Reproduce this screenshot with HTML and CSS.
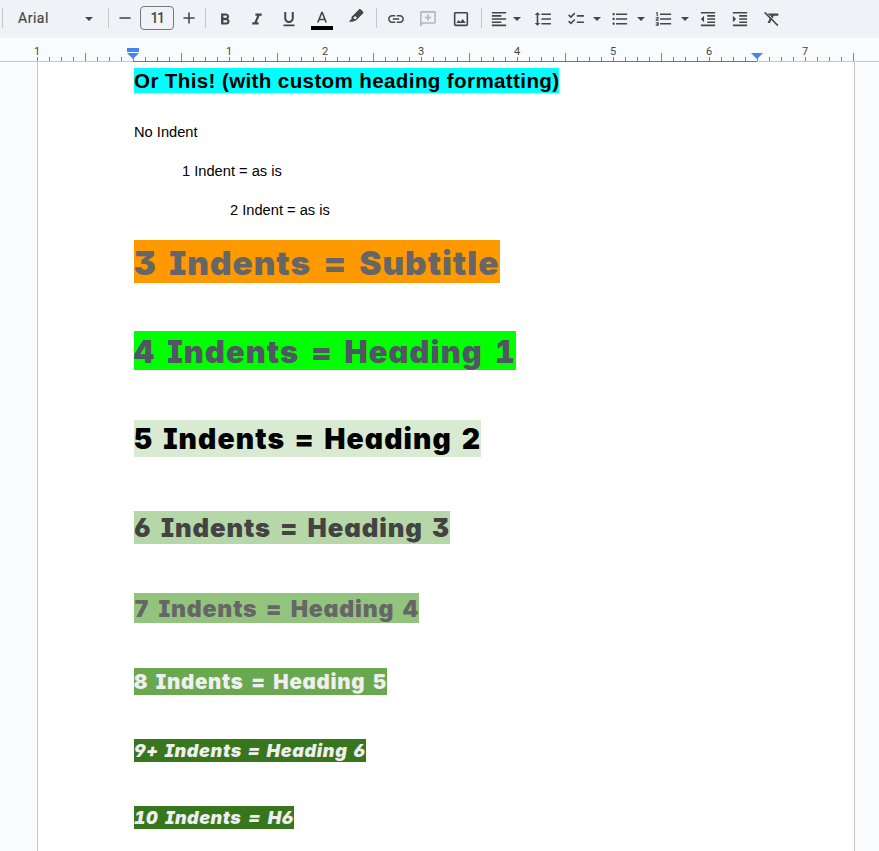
FILE: index.html
```
<!DOCTYPE html>
<html lang="en">
<head>
<meta charset="utf-8">
<title>Document</title>
<link rel="stylesheet" href="styles.css">
</head>
<body>
<div class="toolbar">
  <i class="sep first"></i>
  <span class="font-name">Arial</span><span class="caret font-caret"></span>
  <i class="sep s1"></i>
  <span class="cell minus"><svg viewBox="0 0 24 24"><path d="M5 11h14v2H5z"/></svg></span>
  <span class="size">11</span>
  <span class="cell plus"><svg viewBox="0 0 24 24"><path d="M19 13h-6v6h-2v-6H5v-2h6V5h2v6h6v2z"/></svg></span>
  <i class="sep s2"></i>
  <span class="cell"><svg viewBox="0 0 24 24"><path d="M15.6 11.8c1-.7 1.6-1.8 1.6-2.8 0-2.3-1.8-4-4-4H7v14h7c2.1 0 3.7-1.7 3.7-3.8 0-1.500-.86-2.800-2.100-3.400zM10 7.500h3c.83 0 1.500.67 1.500 1.500s-.67 1.500-1.500 1.500h-3v-3zm3.500 9H10v-3h3.500c.83 0 1.500.67 1.500 1.500s-.67 1.500-1.500 1.500z"/></svg></span>
  <span class="cell"><svg viewBox="0 0 24 24"><path d="M10 5v3h2.200l-3.400 8H6v3h8v-3h-2.200l3.400-8H18V5z"/></svg></span>
  <span class="cell"><svg viewBox="0 0 24 24"><path d="M12 17c3.300 0 6-2.700 6-6V3h-2.500v8c0 1.900-1.600 3.500-3.500 3.500S8.500 12.900 8.500 11V3H6v8c0 3.300 2.700 6 6 6zm-7 2v2h14v-2H5z"/></svg></span>
  <span class="cell wide color"><svg viewBox="0 0 24 24"><path d="M11 3 5.500 17h2.250l1.120-3h6.250l1.120 3h2.250L13 3h-2zm-1.380 9L12 5.700 14.380 12H9.620z"/></svg><b></b></span>
  <span class="cell wide marker"><svg viewBox="0 0 24 24"><path fill-rule="evenodd" d="M15.500 2.700 6.800 11.400c-.7.7-.8 1.700-.2 2.400L3 18h5.300l1.400-1.400c.8.500 1.700.4 2.300-.2l8.800-8.700c.8-.8.800-1.900 0-2.700l-2.400-2.300c-.8-.8-2.100-.8-2.900-.4zM11 10.600l2.200 2.200-2.400 2.300-2.200-2.200z"/></svg></span>
  <i class="sep s3"></i>
  <span class="cell"><svg viewBox="0 0 24 24"><path d="M3.900 12c0-1.710 1.390-3.100 3.100-3.100h4V7H7c-2.760 0-5 2.240-5 5s2.240 5 5 5h4v-1.900H7c-1.710 0-3.100-1.390-3.100-3.100zM8 13h8v-2H8v2zm9-6h-4v1.900h4c1.710 0 3.100 1.390 3.100 3.100s-1.390 3.100-3.100 3.100h-4V17h4c2.760 0 5-2.240 5-5s-2.240-5-5-5z"/></svg></span>
  <span class="cell faded"><svg viewBox="0 0 24 24"><path d="M20 2H4c-1.100 0-2 .9-2 2v18l4-4h14c1.100 0 2-.9 2-2V4c0-1.100-.9-2-2-2zm0 14H5.200L4 17.200V4h16v12zM11 14h2v-3h3V9h-3V6h-2v3H8v2h3z"/></svg></span>
  <span class="cell image"><svg viewBox="0 0 24 24"><path d="M19 5v14H5V5h14m0-2H5c-1.100 0-2 .9-2 2v14c0 1.100.9 2 2 2h14c1.100 0 2-.9 2-2V5c0-1.100-.9-2-2-2zm-4.860 8.860-3 3.870L9 13.140 6 17h12l-3.860-5.140z"/></svg></span>
  <i class="sep s4"></i>
  <span class="cell narrow align"><svg viewBox="0 0 24 24"><path d="M15 15H3v2h12v-2zm0-8H3v2h12V7zM3 13h18v-2H3v2zm0 8h18v-2H3v2zM3 3v2h18V3H3z"/></svg></span><span class="caret c0"></span>
  <span class="cell spacing"><svg viewBox="0 0 24 24"><path d="M6 7h2.500L5 3.500 1.500 7H4v10H1.500L5 20.500 8.500 17H6V7zm4-2v2h12V5H10zm0 14h12v-2H10v2zm0-6h12v-2H10v2z"/></svg></span>
  <span class="cell narrow check"><svg viewBox="0 0 24 24"><path d="M22 7h-9v2h9V7zm0 8h-9v2h9v-2zM5.540 11 2 7.460l1.410-1.410 2.120 2.120 4.240-4.240 1.410 1.410L5.540 11zm0 8L2 15.460l1.410-1.410 2.120 2.120 4.240-4.240 1.410 1.410L5.540 19z"/></svg></span><span class="caret"></span>
  <span class="cell narrow list"><svg viewBox="0 0 24 24"><path d="M4 10.500c-.83 0-1.500.67-1.500 1.500s.67 1.500 1.500 1.500 1.500-.67 1.500-1.500-.67-1.500-1.500-1.500zm0-6c-.83 0-1.500.67-1.500 1.500S3.170 7.500 4 7.500 5.500 6.830 5.500 6 4.830 4.500 4 4.500zm0 12c-.83 0-1.500.68-1.500 1.500s.68 1.500 1.500 1.500 1.500-.68 1.500-1.500-.67-1.500-1.500-1.500zM7 19h14v-2H7v2zm0-6h14v-2H7v2zm0-8v2h14V5H7z"/></svg></span><span class="caret"></span>
  <span class="cell narrow list"><svg viewBox="0 0 24 24"><path d="M1.500 17h2.500v.5H2.500v1H4v.5H1.500v1.500h4V16h-4v1zm1.200-8.500h1.500V3.500H1.800v1.200h.9v3.800zm-1.200 2.500h2.200L1.500 13v1.200h4V13H3.600l1.900-2.100V9.800h-4v1.200zM7 5v2h14V5H7zm0 14h14v-2H7v2zm0-6h14v-2H7v2z"/></svg></span><span class="caret"></span>
  <span class="cell narrow list"><svg viewBox="0 0 24 24"><path d="M11 17h10v-2H11v2zm-8-5 4 4V8l-4 4zm0 9h18v-2H3v2zM3 3v2h18V3H3zm8 6h10V7H11v2zm0 4h10v-2H11v2z"/></svg></span>
  <span class="cell narrow tail"><svg viewBox="0 0 24 24"><path d="M3 21h18v-2H3v2zM3 8v8l4-4-4-4zm8 9h10v-2H11v2zM3 3v2h18V3H3zm8 6h10V7H11v2zm0 4h10v-2H11v2z"/></svg></span>
  <span class="cell narrow tail clear"><svg viewBox="0 0 24 24"><path d="M20 8V5H6.390l3 3h1.830l-.55 1.280 2.090 2.100L14.210 8zM3.410 2.860 2 4.270l6.970 6.970L6.500 17h3l1.570-3.660L18.730 21l1.410-1.410z"/></svg></span>
</div>
<svg class="ruler" width="879" height="24" viewBox="0 0 879 24">
  <defs>
    <pattern id="ticks" x="37" y="0" width="96" height="24" patternUnits="userSpaceOnUse">
      <path d="M0 19h1v4H0zM12 19h1v4h-1zM24 19h1v4h-1zM36 19h1v4h-1zM48 15h1v8h-1zM60 19h1v4h-1zM72 19h1v4h-1zM84 19h1v4h-1z" fill="#808386"/>
    </pattern>
  </defs>
  <rect x="37" y="0" width="817" height="24" fill="url(#ticks)"/>
  <path d="M0 23h879v1H0z" fill="#c7c7c7"/>
  <path d="M133 23h624v1H133z" fill="#757575"/>
  <g class="numbers"><text x="37" y="17">1</text><text x="229" y="17">1</text><text x="325" y="17">2</text><text x="421" y="17">3</text><text x="517" y="17">4</text><text x="613" y="17">5</text><text x="709" y="17">6</text><text x="805" y="17">7</text></g>
  <path d="M127 10h12v4h-12zM127 15h12l-6 6zM751 15h12l-6 6z" fill="#4285f4"/>
</svg>
<main class="page">
  <h1 class="title"><span>Or This! (with custom heading formatting)</span></h1>
  <p>No Indent</p>
  <p class="in1">1 Indent = as is</p>
  <p class="in2">2 Indent = as is</p>
  <h2 class="lex sub"><span>3 Indents = Subtitle</span></h2>
  <h2 class="lex h1"><span>4 Indents = Heading 1</span></h2>
  <h2 class="lex h2"><span>5 Indents = Heading 2</span></h2>
  <h3 class="lex h3"><span>6 Indents = Heading 3</span></h3>
  <h4 class="lex h4"><span>7 Indents = Heading 4</span></h4>
  <h5 class="lex h5"><span>8 Indents = Heading 5</span></h5>
  <h6 class="lex h6"><span>9+ Indents = Heading 6</span></h6>
  <h6 class="lex h6 last"><span>10 Indents = H6</span></h6>
</main>
</body>
</html>
```
FILE: styles.css
```
* { box-sizing: border-box; }
body { margin: 0; width: 879px; height: 851px; overflow: hidden; background: #f9fbfd; font-family: "Liberation Sans", Arial, sans-serif; }
.toolbar { display: flex; align-items: center; height: 38px; padding-left: 2px; background: #eff3f8; color: #444746; }
.toolbar > * { flex: none; }
.sep { width: 1px; height: 20px; background: #c7c7c7; position: relative; top: -1px; }
.font-name { width: 77px; padding: 0 0 2px 15px; font: 400 14px Roboto, sans-serif; letter-spacing: .5px; -webkit-text-stroke: .2px #444746; }
.caret { width: 14px; height: 36px; display: flex; align-items: center; justify-content: center; margin-left: 3px; }
.caret::after { content: ""; border: 4px solid transparent; border-top-color: #444746; border-bottom: 0; }
.font-caret { width: 18px; margin-left: 0; }
.caret.c0 { margin-left: 0; }
.s1 { margin-left: 10px; }
.s2 { margin: 0 3px 0 1px; }
.s3 { margin: 0 3px; }
.s4 { margin-left: 4px; }
.cell { width: 32px; height: 38px; display: flex; align-items: center; justify-content: center; }
.cell svg { width: 20px; height: 20px; padding: .5px; fill: #444746; }
.cell.minus { width: 31px; padding: 0 0 2px 1px; }
.cell.plus { width: 30px; padding-bottom: 2px; }
.cell.wide { width: 34px; }
.cell.image { width: 33px; padding-left: 1px; }
.cell.narrow { width: 22px; }
.align { margin-left: 6px; }
.spacing { margin-left: 3px; }
.check { margin-left: 6px; }
.list { margin-left: 5px; }
.tail { margin-left: 10px; }
.cell.faded svg { fill: #b4b7ba; }
.color { flex-direction: column; }
.cell.color svg { height: 19px; padding: .5px .5px 0; }
.color b { width: 22px; height: 4px; margin-top: -2px; background: #000; }
.marker svg { margin-bottom: 4px; }
.size { width: 34px; height: 24px; border: 1px solid #747775; border-radius: 4px; font: 500 14px/23px Roboto, sans-serif; letter-spacing: -1.500px; text-align: center; position: relative; top: -1px; }
.ruler { display: block; }
.numbers { font: 11px Roboto, sans-serif; fill: #444746; text-anchor: middle; }
.page { margin-left: 37px; width: 818px; height: 789px; padding: 6px 0 0 96px; background: #fff; border: 1px solid #c7c7c7; border-width: 0 1px; }
h1, h2, h3, h4, h5, h6, p { margin: 0; white-space: nowrap; }
h1 span, .lex span { display: block; width: max-content; height: 100%; }
.title { height: 25px; margin-bottom: 29px; font-size: 20.600px; line-height: 26px; letter-spacing: .36px; }
.title span { background: #0ff; }
p { height: 20px; margin-bottom: 19px; font-size: 14.67px; line-height: 20px; color: #000; }
.in1 { padding-left: 48px; }
.in2 { padding-left: 96px; margin-bottom: 20px; }
.lex { font-family: Inter, sans-serif; font-weight: 900; font-feature-settings: "cv08", "cv11", "cv03", "cv04", "cv09", "tnum"; line-height: 1.37; letter-spacing: .03em; }
.sub { height: 43px; margin-bottom: 48px; font-size: 33.4px; line-height: 47px; word-spacing: .083em; color: #666; }
.sub span { background: #f90; }
.h1 { height: 39px; margin-bottom: 50px; font-size: 30.8px; letter-spacing: .0355em; word-spacing: .092em; color: #505763; }
.h1 span { background: #0f0; }
.h2 { height: 37px; margin-bottom: 54px; font-size: 28.3px; letter-spacing: .039em; word-spacing: .04em; color: #000; }
.h2 span { background: #d9ead3; }
.h3 { height: 33px; margin-bottom: 49px; font-size: 25.7px; line-height: 34px; letter-spacing: .0355em; word-spacing: .065em; color: #434343; }
.h3 span { background: #b6d7a8; }
.h4 { height: 30px; margin-bottom: 45px; font-size: 23.1px; line-height: 33px; letter-spacing: .036em; word-spacing: .072em; color: #666; }
.h4 span { background: #93c47d; }
.h5 { height: 27px; margin-bottom: 44px; font-size: 20.5px; letter-spacing: .035em; word-spacing: .08em; color: #efefef; }
.h5 span { background: #6aa84f; }
.h6 { height: 23px; margin-bottom: 44px; font-size: 18px; font-style: italic; letter-spacing: .0375em; word-spacing: .033em; color: #efefef; }
.h6 span { background: #38761d; }
.last { letter-spacing: .027em; word-spacing: .1em; }
```
